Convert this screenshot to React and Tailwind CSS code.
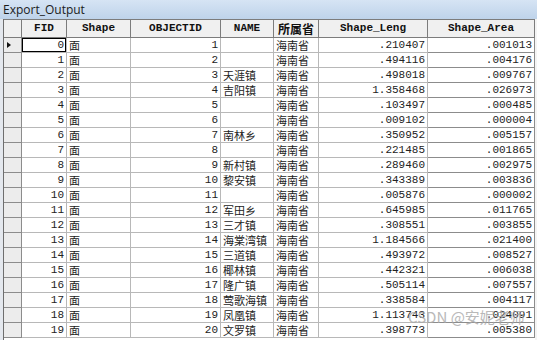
import React from "react";

const rows = [
  [0, 1, "", ".210407", ".001013"],
  [1, 2, "", ".494116", ".004176"],
  [2, 3, "天涯镇", ".498018", ".009767"],
  [3, 4, "吉阳镇", "1.358468", ".026973"],
  [4, 5, "", ".103497", ".000485"],
  [5, 6, "", ".009102", ".000004"],
  [6, 7, "南林乡", ".350952", ".005157"],
  [7, 8, "", ".221485", ".001865"],
  [8, 9, "新村镇", ".289460", ".002975"],
  [9, 10, "黎安镇", ".343389", ".003836"],
  [10, 11, "", ".005876", ".000002"],
  [11, 12, "军田乡", ".645985", ".011765"],
  [12, 13, "三才镇", ".308551", ".003855"],
  [13, 14, "海棠湾镇", "1.184566", ".021400"],
  [14, 15, "三道镇", ".493972", ".008527"],
  [15, 16, "椰林镇", ".442321", ".006038"],
  [16, 17, "隆广镇", ".505114", ".007557"],
  [17, 18, "莺歌海镇", ".338584", ".004117"],
  [18, 19, "凤凰镇", "1.113743", ".024091"],
  [19, 20, "文罗镇", ".398773", ".005380"],
];

const mono = { fontFamily: '"Liberation Mono", "Noto Sans CJK SC", monospace' };
const cjk = { fontFamily: '"Noto Sans CJK SC", "Liberation Sans", sans-serif' };

function H({ w, children, cjkFont }) {
  return (
    <div
      className={`${w} shrink-0 h-full flex items-center justify-center border-r border-[#7c7c7c] bg-[#f0f0f0] font-bold text-[#111] ${cjkFont ? "text-[12px]" : "text-[11px]"}`}
      style={cjkFont ? cjk : mono}
    >
      {children}
    </div>
  );
}

export default function App() {
  return (
    <div className="relative w-[537px] h-[340px] overflow-hidden bg-white">
      <div
        className="h-[19px] bg-gradient-to-b from-[#d6e4f4] to-[#bed3ea] pl-[3px] flex items-center text-[12px] text-[#1b1b1b]"
        style={{ fontFamily: '"Open Sans", "Liberation Sans", sans-serif' }}
      >
        Export_Output
      </div>
      <div className="flex">
        <div className="w-[3px] shrink-0 bg-[#e4e8ee] h-[321px]" />
        <div className="w-[1px] shrink-0 bg-[#6e6e6e] h-[321px]" />
        <div className="flex flex-col w-[531px] shrink-0">
          <div className="flex h-[19px] border-t border-b border-[#7c7c7c]">
            <div className="w-[18px] shrink-0 h-full border-r border-[#7c7c7c] bg-[#f0f0f0]" />
            <H w="w-[45px]">FID</H>
            <H w="w-[64px]">Shape</H>
            <H w="w-[90px]">OBJECTID</H>
            <H w="w-[53px]">NAME</H>
            <H w="w-[45px]" cjkFont>所属省</H>
            <H w="w-[109px]">Shape_Leng</H>
            <H w="w-[107px]">Shape_Area</H>
          </div>
          {rows.map((r, i) => (
            <div key={i} className="flex h-[15px] text-[11px] text-[#222] leading-none">
              <div className="w-[18px] shrink-0 h-full bg-[#ececec] border-r border-b border-[#8c8c8c] flex items-center pl-[3px]">
                {i === 0 && (
                  <svg width="4" height="6" viewBox="0 0 4 6">
                    <path d="M0 0 L4 3 L0 6 Z" fill="#111" />
                  </svg>
                )}
              </div>
              <div
                className={`w-[45px] shrink-0 h-full border-r border-b border-[#b8b8b8] flex items-center justify-end pr-[2px] ${i === 0 ? "shadow-[inset_0_0_0_1px_#000]" : ""}`}
                style={mono}
              >
                {r[0]}
              </div>
              <div className="w-[64px] shrink-0 h-full border-r border-b border-[#b8b8b8] flex items-center pl-[2px]" style={cjk}>
                面
              </div>
              <div className="w-[90px] shrink-0 h-full border-r border-b border-[#b8b8b8] flex items-center justify-end pr-[2px]" style={mono}>
                {r[1]}
              </div>
              <div className="w-[53px] shrink-0 h-full border-r border-b border-[#b8b8b8] flex items-center pl-[2px] whitespace-nowrap overflow-hidden" style={cjk}>
                {r[2]}
              </div>
              <div className="w-[45px] shrink-0 h-full border-r border-b border-[#b8b8b8] flex items-center pl-[2px]" style={cjk}>
                海南省
              </div>
              <div className="w-[109px] shrink-0 h-full border-r border-b border-[#b8b8b8] flex items-center justify-end pr-[2px]" style={mono}>
                {r[3]}
              </div>
              <div className="w-[107px] shrink-0 h-full border-r border-b border-[#8c8c8c] flex items-center justify-end pr-[2px]" style={mono}>
                {r[4]}
              </div>
            </div>
          ))}
        </div>
        <div className="w-[2px] shrink-0 bg-[#f4f4f4] h-[321px]" />
      </div>
      <div
        className="absolute left-[408px] top-[306px] text-[15px] text-[#a8a8a8] opacity-80 whitespace-nowrap"
        style={cjk}
      >
        CSDN @安妮老师
      </div>
    </div>
  );
}
